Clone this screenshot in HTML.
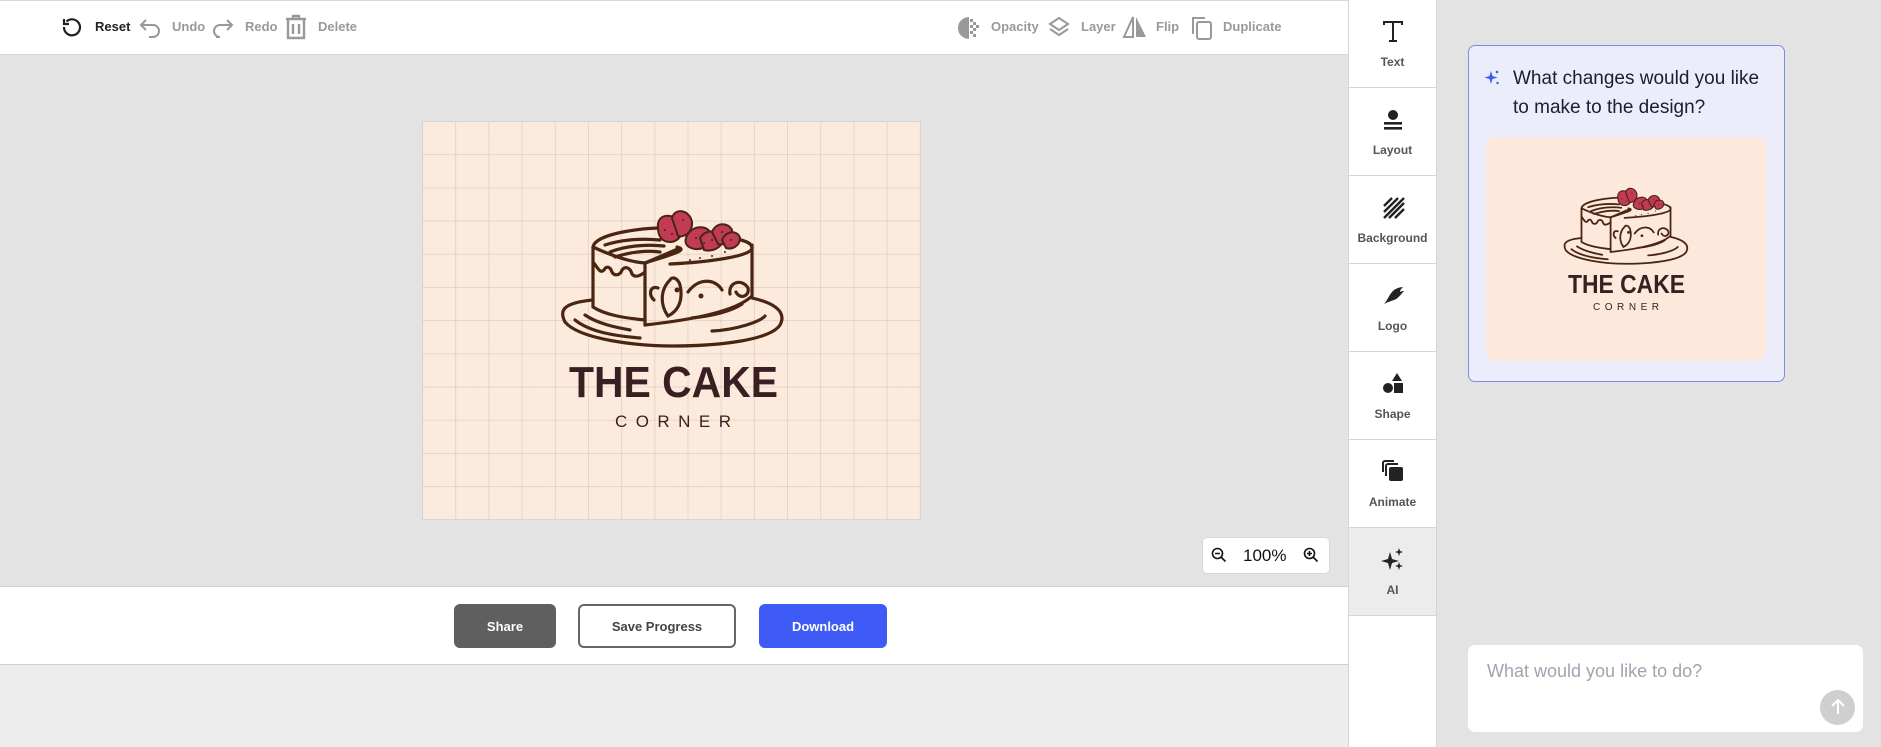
<!DOCTYPE html>
<html><head><meta charset="utf-8">
<style>
*{box-sizing:border-box;margin:0;padding:0}
body{width:1881px;height:747px;overflow:hidden;background:#ededed;font-family:"Liberation Sans",sans-serif;position:relative}
.abs{position:absolute}
#top{left:0;top:0;width:1348px;height:55px;background:#fff;border-top:1px solid #d8d8d8;border-bottom:1px solid #d5d5d5}
#work{left:0;top:55px;width:1348px;height:532px;background:#e3e3e3}
#bottom{left:0;top:586px;width:1348px;height:79px;background:#fff;border-top:1px solid #d0d0d0;border-bottom:1px solid #d0d0d0}
.tb{position:absolute;top:19px;font-size:13px;font-weight:bold;color:#999}
#canvas{left:422px;top:121px;width:499px;height:399px;background-color:#fcebdd;border:1px solid #d5d5d5;
background-image:linear-gradient(to right,rgba(160,130,120,.22) 1px,transparent 1px),linear-gradient(to bottom,rgba(160,130,120,.22) 1px,transparent 1px);
background-size:33.2px 33.2px;background-position:-1px -1px}
#zoom{left:1202px;top:537px;width:128px;height:37px;background:#fff;border:1px solid #d8d8d8;border-radius:5px}
.btn{position:absolute;top:604px;height:44px;border-radius:6px;font-size:13px;font-weight:bold;display:flex;align-items:center;justify-content:center}
#side{left:1348px;top:0;width:89px;height:747px;background:#fff;border-left:1px solid #d5d5d5;border-right:1px solid #d5d5d5}
.si{position:absolute;left:0;width:87px;height:88px;border-bottom:1px solid #d5d5d5;text-align:center}
.si span{position:absolute;left:0;right:0;top:55px;font-size:12px;font-weight:bold;color:#555}
.si svg{position:absolute;left:31px;top:18px}
#right{left:1437px;top:0;width:444px;height:747px;background:#e3e3e3}
#card{left:1468px;top:45px;width:317px;height:337px;background:#ebedfb;border:1.5px solid #7d8ce8;border-radius:7px}
#q{left:1513px;top:64px;font-size:19px;line-height:29px;color:#1d1d2b;width:260px}
#prev{left:1486px;top:137px;width:280px;height:224px;background:#fce9dc;border-radius:10px}
#inp{left:1468px;top:645px;width:395px;height:87px;background:#fff;border-radius:7px}
</style></head><body>
<div id="top" class="abs"></div>
<div id="work" class="abs"></div>
<div id="bottom" class="abs"></div>

<!-- toolbar -->
<svg class="abs" style="left:60px;top:15px" width="24" height="24" viewBox="0 0 24 24" fill="none" stroke="#222" stroke-width="2.2"><path d="M6.5 6.5A8 8 0 1 1 4 12"/><path d="M4 4v5h5" /></svg>
<div class="tb" style="left:95px;color:#222">Reset</div>
<svg class="abs" style="left:138px;top:15px" width="24" height="24" viewBox="0 0 24 24" fill="none" stroke="#999" stroke-width="2"><path d="M8 5L3 10l5 5"/><path d="M3 10h12a6 6 0 0 1 0 12h-4"/></svg>
<div class="tb" style="left:172px">Undo</div>
<svg class="abs" style="left:211px;top:15px" width="24" height="24" viewBox="0 0 24 24" fill="none" stroke="#999" stroke-width="2"><path d="M16 5l5 5-5 5"/><path d="M21 10H9a6 6 0 0 0 0 12h-4"/></svg>
<div class="tb" style="left:245px">Redo</div>
<svg class="abs" style="left:284px;top:14px" width="24" height="26" viewBox="0 0 24 26" fill="none" stroke="#999" stroke-width="2.4"><path d="M2 5h20M9 5V2h6v3M4 6v18h16V6M9 10v10M15 10v10"/></svg>
<div class="tb" style="left:318px">Delete</div>

<svg class="abs" style="left:957px;top:16px" width="24" height="24" viewBox="0 0 24 24"><path d="M12 1a11 11 0 0 0 0 22z" fill="#999"/><g fill="#999"><rect x="13" y="3" width="3" height="3"/><rect x="16" y="6" width="3" height="3"/><rect x="13" y="9" width="3" height="3"/><rect x="19" y="9" width="3" height="3"/><rect x="16" y="12" width="3" height="3"/><rect x="13" y="15" width="3" height="3"/><rect x="16" y="18" width="3" height="3"/></g></svg>
<div class="tb" style="left:991px">Opacity</div>
<svg class="abs" style="left:1048px;top:15px" width="22" height="24" viewBox="0 0 22 24" fill="none" stroke="#999" stroke-width="2"><path d="M11 3l9 6-9 6-9-6z"/><path d="M2 14l9 6 9-6"/></svg>
<div class="tb" style="left:1081px">Layer</div>
<svg class="abs" style="left:1122px;top:15px" width="26" height="24" viewBox="0 0 26 24"><path d="M11 2L2 22h9z" fill="none" stroke="#999" stroke-width="2"/><path d="M14 2l10 20H14z" fill="#999"/></svg>
<div class="tb" style="left:1156px">Flip</div>
<svg class="abs" style="left:1189px;top:15px" width="26" height="26" viewBox="0 0 26 26" fill="none" stroke="#999" stroke-width="2"><path d="M4 19V3h12"/><rect x="8" y="7" width="14" height="17" rx="2"/></svg>
<div class="tb" style="left:1223px">Duplicate</div>

<div id="canvas" class="abs"></div>

<svg width="0" height="0" style="position:absolute">
<defs>
<symbol id="cake" viewBox="555 200 235 150">
<g fill="none" stroke="#4a2511" stroke-width="3.2" stroke-linecap="round">
<path d="M593 300 C 560 303 560 312 565 322 C 580 340 640 346 672 346 C 720 346 770 340 780 325 C 788 310 770 302 752 298"/>
<path d="M585 315 C 600 325 620 328 630 330"/>
<path d="M712 331 C 735 330 760 322 765 316"/>
<path d="M575 320 C 590 332 615 336 640 338"/>
<path d="M593 247 C 595 234 640 227 675 228"/>
<path d="M593 247 L593 307 C 605 315 625 318 645 320"/>
<path d="M593 247 C 610 255 630 262 645 263"/>
<path d="M645 263 L645 325"/>
<path d="M645 325 C 690 320 735 312 752 296 L752 245"/>
<path d="M645 263 C 670 255 690 250 677 247"/>
<path d="M645 263 L680 248"/>
<path d="M730 238 C 745 240 752 243 752 248 C 752 256 710 262 670 264"/>
<path d="M605 245 C 620 240 640 238 660 240 M610 252 C 625 246 645 244 664 246 M615 257 C 630 252 648 250 660 252"/>
<path d="M593 262 C 598 268 600 274 604 270 C 606 266 610 266 612 272 C 614 276 620 276 622 270 C 625 266 630 267 632 274 C 635 278 640 276 645 272"/>
<path d="M670 280 C 660 290 660 305 668 316 C 680 310 683 298 680 285 C 678 278 672 276 670 280"/>
<path d="M688 292 C 698 278 715 278 722 290 M730 294 C 728 282 742 278 748 288 C 750 296 740 300 736 292"/>
<path d="M692 318 C 710 316 730 312 742 304"/>
<path d="M658 288 C 650 285 648 295 654 300"/>
</g>
<circle cx="677" cy="290" r="2.5" fill="#4a2511"/>
<circle cx="701" cy="296" r="2.5" fill="#4a2511"/>
<g fill="#c23b55" stroke="#4a2511" stroke-width="2">
<path d="M658 228 C 656 214 672 212 680 222 C 686 230 680 242 670 242 C 662 242 658 236 658 228z"/>
<path d="M672 218 C 675 207 690 210 692 222 C 693 232 684 238 678 236z"/>
<path d="M686 238 C 690 226 705 224 710 232 C 714 242 705 250 695 249 C 688 248 684 244 686 238z"/>
<path d="M700 238 C 706 228 722 230 722 240 C 722 248 712 252 704 250z"/>
<path d="M712 232 C 716 222 728 222 732 230 C 734 240 726 246 718 244z"/>
<path d="M722 240 C 726 230 738 230 740 238 C 740 246 732 250 726 248z"/>
</g>
<g fill="#4a2511"><circle cx="665" cy="230" r="1"/><circle cx="672" cy="234" r="1"/><circle cx="683" cy="220" r="1"/><circle cx="696" cy="238" r="1"/><circle cx="704" cy="243" r="1"/><circle cx="712" cy="240" r="1"/><circle cx="722" cy="232" r="1"/><circle cx="731" cy="240" r="1"/>
<circle cx="700" cy="258" r="1"/><circle cx="712" cy="256" r="1"/><circle cx="690" cy="260" r="1"/><circle cx="725" cy="252" r="1"/></g>
</symbol>
</defs>
</svg>

<svg class="abs" style="left:555px;top:200px" width="235" height="150"><use href="#cake"/></svg>
<svg class="abs" style="left:0;top:0" width="1348" height="600">
<text x="569" y="397" font-family="Liberation Sans" font-weight="bold" font-size="44" fill="#3a1e22" textLength="209" lengthAdjust="spacingAndGlyphs">THE CAKE</text>
<text x="615" y="427" font-family="Liberation Sans" font-size="17" fill="#3a1e22" textLength="116" lengthAdjust="spacing">CORNER</text>
</svg>

<div id="zoom" class="abs"></div>
<svg class="abs" style="left:1211px;top:547px" width="16" height="16" viewBox="0 0 16 16" fill="none" stroke="#111" stroke-width="1.6"><circle cx="6.5" cy="6.5" r="5"/><path d="M10 10l4.5 4.5M4 6.5h5"/></svg>
<div class="abs" style="left:1243px;top:546px;font-size:17px;color:#111">100%</div>
<svg class="abs" style="left:1303px;top:547px" width="16" height="16" viewBox="0 0 16 16" fill="none" stroke="#111" stroke-width="1.6"><circle cx="6.5" cy="6.5" r="5"/><path d="M10 10l4.5 4.5M4 6.5h5M6.5 4v5"/></svg>

<div class="btn" style="left:454px;width:102px;background:#5f5f5f;color:#fff">Share</div>
<div class="btn" style="left:578px;width:158px;background:#fff;border:2px solid #666;color:#444">Save Progress</div>
<div class="btn" style="left:759px;width:128px;background:#3f5bf6;color:#fff">Download</div>

<div id="side" class="abs">
<div class="si" style="top:0"><svg width="26" height="26" viewBox="0 0 26 26" fill="none" stroke="#222" stroke-width="2"><path d="M4 7V4h18v3M13 4v19M9 23h8"/></svg><span>Text</span></div>
<div class="si" style="top:88px"><svg width="26" height="26" viewBox="0 0 26 26"><circle cx="13" cy="9" r="5" fill="#222"/><rect x="4" y="16" width="18" height="2.6" fill="#222"/><rect x="4" y="21" width="18" height="2.6" fill="#222"/></svg><span>Layout</span></div>
<div class="si" style="top:176px"><svg width="26" height="26" viewBox="0 0 26 26" stroke="#222" stroke-width="2.4"><path d="M4 12L12 4M4 18L18 4M4 24L24 4M9 24L24 9M15 24L24 15"/></svg><span>Background</span></div>
<div class="si" style="top:264px"><svg width="26" height="26" viewBox="0 0 26 26"><path d="M4 22C8 18 9 12 14 8c3-2 7-3 9-3-2 2-3 3-3 5 2-1 3-1 4-1-3 3-5 7-10 9-3 1-6 2-10 4z" fill="#222"/></svg><span>Logo</span></div>
<div class="si" style="top:352px"><svg width="26" height="26" viewBox="0 0 26 26"><path d="M17 3l5 8H12z" fill="#222"/><circle cx="8" cy="18" r="5" fill="#222"/><rect x="14" y="13" width="9" height="10" fill="#222"/></svg><span>Shape</span></div>
<div class="si" style="top:440px"><svg width="26" height="26" viewBox="0 0 26 26"><rect x="9" y="9" width="14" height="14" rx="2" fill="#222"/><path d="M6 18V8a2 2 0 0 1 2-2h10" fill="none" stroke="#222" stroke-width="2"/><path d="M3 14V5a2 2 0 0 1 2-2h9" fill="none" stroke="#222" stroke-width="2"/></svg><span>Animate</span></div>
<div class="si" style="top:528px;background:#ececec"><svg width="26" height="26" viewBox="0 0 26 26" fill="#222"><path d="M10 6l2 7 7 2-7 2-2 7-2-7-7-2 7-2z"/><path d="M19 2l1 3 3 1-3 1-1 3-1-3-3-1 3-1z"/><path d="M19 16l1 3 3 1-3 1-1 3-1-3-3-1 3-1z"/></svg><span>AI</span></div>
</div>

<div id="right" class="abs"></div>
<div id="card" class="abs"></div>
<svg class="abs" style="left:1484px;top:69px" width="16" height="16" viewBox="0 0 16 16" fill="#3f5bf6"><path d="M7 2l1.5 5 5 1.5-5 1.5L7 15l-1.5-5L.5 8.5l5-1.5z"/><circle cx="13" cy="3" r="1.3"/><circle cx="13.5" cy="14" r="1.2"/></svg>
<div id="q" class="abs">What changes would you like to make to the design?</div>
<div id="prev" class="abs"></div>
<svg class="abs" style="left:1560px;top:182px" width="132" height="84"><use href="#cake"/></svg>
<svg class="abs" style="left:1486px;top:260px" width="280" height="60">
<text x="82" y="33" font-family="Liberation Sans" font-weight="bold" font-size="26" fill="#3a1e22" textLength="117" lengthAdjust="spacingAndGlyphs">THE CAKE</text>
<text x="107" y="50" font-family="Liberation Sans" font-size="10" fill="#3a1e22" textLength="66" lengthAdjust="spacing">CORNER</text>
</svg>

<div id="inp" class="abs"></div>
<div class="abs" style="left:1487px;top:661px;font-size:18px;color:#a0a4b0">What would you like to do?</div>
<div class="abs" style="left:1820px;top:690px;width:35px;height:35px;border-radius:50%;background:#cfcfcf"></div>
<svg class="abs" style="left:1828px;top:697px" width="20" height="20" viewBox="0 0 20 20" fill="none" stroke="#fff" stroke-width="2"><path d="M10 17V3M4 9l6-6 6 6"/></svg>
</body></html>
